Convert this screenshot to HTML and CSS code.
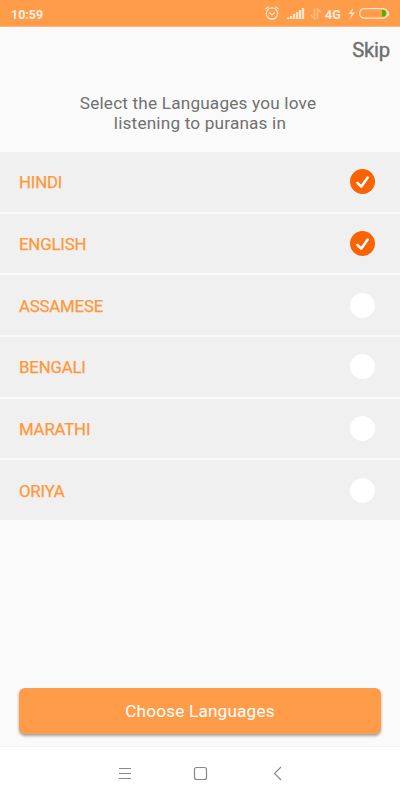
FILE: index.html
```html
<!DOCTYPE html>
<html lang="en">
<head>
<meta charset="utf-8">
<title>Choose Languages</title>
<link rel="stylesheet" href="styles.css">
</head>
<body>
<div class="screen">
  <header class="status">
    <span class="time">10:59</span>
    <svg class="status-icons" width="145" height="27" viewBox="0 0 145 27" fill="none" stroke="#ffe6d0">
      <circle cx="17" cy="13.500" r="5.700" stroke-width="1.200"/>
      <path d="M14 12.500l3 2.300 3-2.300M10.500 9l3-2.400M23.500 9l-3-2.400" stroke-width="1.200"/>
      <path d="M33 17.500v1.500M36 16v3M39 14v5M42 12v7M45 10v9M48 8v11" stroke-width="2.300"/>
      <path d="M59.500 8.500v10L56 15M62.500 19V9l3.500 3.500" stroke="#ffc28f" stroke-width="1.400"/>
      <path d="M98 8l-4.500 6h3l-1.500 5 5-6.500h-3z" fill="#ffe6d0" stroke="none"/>
      <rect x="104.600" y="8.600" width="28" height="9.600" rx="4.800" stroke-width="1.200"/>
      <path d="M127 10h1.500c3.300 0 3.300 6.500 0 6.500H127z" fill="#38bd00" stroke="none"/>
      <path d="M133.500 11.500v4" stroke-width="1.200"/>
    </svg>
    <span class="network">4G</span>
  </header>
  <main class="content">
    <div class="topbar"><a class="skip">Skip</a></div>
    <h1 class="title"><span class="line-one">Select the Languages you love</span><br><span class="line-two">listening to puranas in</span></h1>
    <ul class="languages">
      <li class="language"><span>HINDI</span><svg class="check" viewBox="0 0 25 25"><circle cx="12.500" cy="12.500" r="12.500" fill="#f96302"/><path d="M7.500 14l3.700 3.700 6.500-9.200" fill="none" stroke="#fff" stroke-width="2.500" stroke-linecap="round" stroke-linejoin="round"/></svg></li>
      <li class="language"><span>ENGLISH</span><svg class="check" viewBox="0 0 25 25"><circle cx="12.500" cy="12.500" r="12.500" fill="#f96302"/><path d="M7.500 14l3.700 3.700 6.500-9.200" fill="none" stroke="#fff" stroke-width="2.500" stroke-linecap="round" stroke-linejoin="round"/></svg></li>
      <li class="language"><span>ASSAMESE</span><i class="check empty"></i></li>
      <li class="language"><span>BENGALI</span><i class="check empty"></i></li>
      <li class="language"><span>MARATHI</span><i class="check empty"></i></li>
      <li class="language"><span>ORIYA</span><i class="check empty"></i></li>
    </ul>
    <button class="choose">Choose Languages</button>
  </main>
  <nav class="navbar">
    <svg width="400" height="53" viewBox="0 0 400 53" fill="none" stroke="#888">
      <path d="M119 21.500h12M119 26.500h12M119 31.500h12"/>
      <rect x="194.500" y="20.500" width="12" height="12" rx="2" stroke-width="1.200"/>
      <path d="M281 20l-6.500 6.500L281 33" stroke-width="1.100"/>
    </svg>
  </nav>
</div>
</body>
</html>
```
FILE: styles.css
```css
* { box-sizing: border-box; }
body { margin: 0; font-family: Roboto, sans-serif; }
.screen { width: 400px; height: 800px; display: flex; flex-direction: column; background: #fafafa; overflow: hidden; }
.status { height: 27px; flex: none; position: relative; display: flex; align-items: center; justify-content: space-between; background: #ff9c4a; border-bottom: 1px solid #ffb57a; color: #ffeee0; }
.time { margin-left: 11px; padding-top: 2px; font-size: 12.5px; font-weight: 700; line-height: 15px; }
.status-icons { flex: none; }
.network { position: absolute; left: 325px; top: 7px; font-size: 12.5px; font-weight: 700; line-height: 15px; }
.content { flex: 1; display: flex; flex-direction: column; }
.topbar { height: 66px; padding: 11px 10px 0 0; text-align: right; }
.skip { font-size: 20.3px; line-height: 24px; font-weight: 400; letter-spacing: -.2px; color: #707070; -webkit-text-stroke: .4px #707070; }
.title { margin: 0; height: 59px; font-size: 17.2px; letter-spacing: .18px; line-height: 20px; font-weight: 400; text-align: center; color: #707070; padding-right: 4px; }
.line-two { margin-left: 4px; }
.languages { list-style: none; margin: 0; padding: 0; display: grid; grid-template-rows: repeat(6, 59.67px); gap: 2px; }
.language { display: flex; align-items: center; justify-content: space-between; padding: 0 25px 0 19px; background: #f0f0f0; color: #ff9838; font-size: 16.8px; letter-spacing: -.18px; line-height: 20px; font-weight: 400; -webkit-text-stroke: .25px #ff9838; }
.language span { padding-top: 1.3px; }
.check { width: 25px; height: 25px; flex: none; }
.empty { border-radius: 50%; background: #fff; }
.choose { margin: auto 19px 12px; height: 46px; padding: 0; border: 0; border-radius: 6px; background: #ff9c4a; box-shadow: 0 2px 3px rgba(0,0,0,.35); color: #fff; font-family: inherit; font-size: 17.2px; letter-spacing: .18px; }
.navbar { height: 54px; flex: none; border-top: 1px solid #f2f2f2; background: #fff; }
.navbar svg { display: block; }
```
